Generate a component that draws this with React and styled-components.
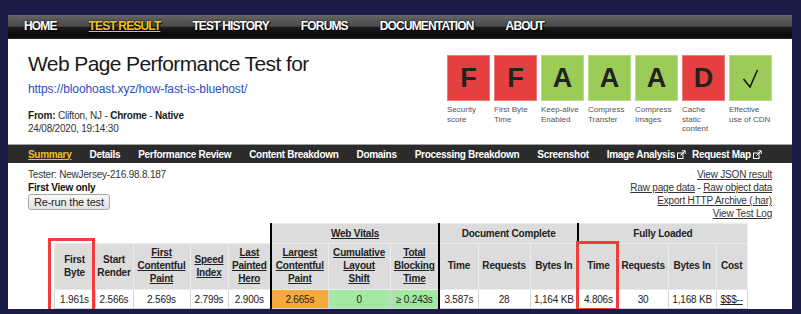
import React from 'react';
import styled, { createGlobalStyle } from 'styled-components';

const GlobalStyle = createGlobalStyle`
  html, body { margin: 0; padding: 0; background: #1b1c47; }
  body { font-family: "Liberation Sans", Arial, sans-serif; color: #222; }
`;

const Page = styled.div`
  padding: 15px 9px 0 8px;
`;

const TopNav = styled.nav`
  height: 24px;
  box-sizing: border-box;
  display: flex;
  align-items: center;
  gap: 32px;
  padding: 0 0 2px 16px;
  background: linear-gradient(to bottom, #646464 0%, #4b4b4b 46%, #1c1c1c 52%, #070707 88%, #262626 100%);
`;

const NavLink = styled.a`
  font-family: "Liberation Sans", Arial, sans-serif;
  font-weight: bold;
  font-size: 12px;
  letter-spacing: -0.85px;
  line-height: 16px;
  color: ${p => (p.$active ? '#f2c12e' : '#fff')};
  text-decoration: ${p => (p.$active ? 'underline' : 'none')};
  text-shadow: 1px 1px 1px #000, 0 0 2px #000;
`;

const Panel = styled.div`
  background: #fff;
`;

const Header = styled.header`
  height: 105px;
  box-sizing: border-box;
  padding: 13px 20px 0;
  display: flex;
  justify-content: space-between;
  align-items: flex-start;
`;

const Title = styled.h1`
  margin: 0;
  font-size: 21px;
  font-weight: normal;
  line-height: 24px;
  letter-spacing: -0.6px;
  color: #1a1a1a;
`;

const UrlLink = styled.a`
  display: block;
  margin-top: 5px;
  font-size: 12px;
  line-height: 16px;
  letter-spacing: -0.1px;
  color: #2a4dc8;
  text-decoration: none;
`;

const Meta = styled.div`
  margin-top: 12px;
  font-size: 10px;
  line-height: 13px;
  letter-spacing: -0.2px;
  color: #333;
  b { color: #1a1a1a; }
`;

const Grades = styled.div`
  display: flex;
  gap: 4px;
  margin-top: 3px;
`;

const Grade = styled.div`
  width: 43px;
`;

const GradeBox = styled.div`
  height: 46px;
  background: ${p => p.$color};
  display: flex;
  align-items: center;
  justify-content: center;
  font-size: 27px;
  font-weight: bold;
  color: #222;
  box-shadow: inset 0 0 0 1px rgba(255, 255, 255, 0.3);
`;

const GradeLabel = styled.div`
  margin-top: 4px;
  font-size: 8px;
  line-height: 9.5px;
  color: #555;
  white-space: nowrap;
`;

const SubNav = styled.nav`
  height: 18px;
  border-top: 1px solid #a0a0a0;
  background: #2b2b2b;
  display: flex;
  align-items: center;
  padding-left: 20px;
  gap: 18px;
`;

const SubLink = styled.a`
  display: inline-flex;
  align-items: center;
  gap: 2px;
  font-size: 10px;
  font-weight: bold;
  letter-spacing: -0.3px;
  color: ${p => (p.$active ? '#f0be2c' : '#fff')};
  text-decoration: ${p => (p.$active ? 'underline' : 'none')};
  margin-right: ${p => (p.$tight ? '-12px' : '0')};
`;

const Body = styled.div`
  padding: 5px 20px 0;
`;

const InfoRow = styled.div`
  display: flex;
  justify-content: space-between;
  align-items: flex-start;
`;

const InfoText = styled.div`
  font-size: 10px;
  line-height: 13px;
  letter-spacing: -0.2px;
  color: #333;
`;

const Strong = styled.div`
  font-weight: bold;
  color: #111;
`;

const Button = styled.button`
  height: 16px;
  box-sizing: border-box;
  padding: 0 5px;
  font-family: inherit;
  font-size: 11px;
  letter-spacing: -0.2px;
  color: #222;
  border: 1px solid #a8a8a8;
  border-radius: 3px;
  background: linear-gradient(#fbfbfb, #e2e2e2);
  display: flex;
  align-items: center;
`;

const Links = styled.div`
  text-align: right;
  font-size: 10px;
  line-height: 13px;
  letter-spacing: -0.2px;
  color: #333;
`;

const TextLink = styled.a`
  color: #333;
  text-decoration: underline;
`;

const TableWrap = styled.div`
  position: relative;
  width: 693px;
  margin: 3px auto 0;
`;

const Results = styled.table`
  border-collapse: collapse;
  table-layout: fixed;
  width: 693px;
  font-size: 10px;
  letter-spacing: -0.2px;
  color: #222;
  text-align: center;
`;

const Blank = styled.th`
  border: none;
  padding: 0;
`;

const GroupHead = styled.th`
  height: 19px;
  padding: 0;
  background: #dcdcdc;
  border: 1px solid #ececec;
  border-left: 2px solid #000;
  font-weight: bold;
  color: #222;
`;

const ColHead = styled.th`
  height: 45px;
  padding: 0 1px;
  background: #dcdcdc;
  border: 1px solid #ececec;
  border-left: ${p => (p.$divider ? '2px solid #000' : '1px solid #ececec')};
  font-weight: bold;
  line-height: 12.7px;
  color: #222;
  vertical-align: middle;
`;

const HeadLink = styled.a`
  color: #222;
  text-decoration: underline;
`;

const Cell = styled.td`
  height: 18px;
  padding: 0;
  white-space: nowrap;
  background: ${p => p.$bg || '#fff'};
  border: 1px solid #d4d4d4;
  border-left: ${p => (p.$divider ? '2px solid #000' : '1px solid #d4d4d4')};
`;

const CostLink = styled.a`
  color: #222;
  text-decoration: underline;
`;

const Highlight = styled.div`
  position: absolute;
  left: ${p => p.$left}px;
  top: ${p => p.$top}px;
  width: ${p => p.$width}px;
  height: ${p => p.$height}px;
  box-sizing: border-box;
  border: 3px solid #f03c3c;
  pointer-events: none;
`;

const RED = '#e5403f';
const GREEN = '#9dcb57';

const grades = [
  { v: 'F', c: RED, l: ['Security', 'score'] },
  { v: 'F', c: RED, l: ['First Byte', 'Time'] },
  { v: 'A', c: GREEN, l: ['Keep-alive', 'Enabled'] },
  { v: 'A', c: GREEN, l: ['Compress', 'Transfer'] },
  { v: 'A', c: GREEN, l: ['Compress', 'Images'] },
  { v: 'D', c: RED, l: ['Cache', 'static', 'content'] },
  { v: 'check', c: GREEN, l: ['Effective', 'use of CDN'] },
];

const Check = () => (
  <svg width="17" height="19" viewBox="0 0 17 19">
    <polyline points="1.5,10 8,18 15.5,1" fill="none" stroke="#111" strokeWidth="1.5" strokeLinejoin="miter" />
  </svg>
);

const ExtIcon = () => (
  <svg width="9" height="9" viewBox="0 0 9 9">
    <rect x="0.5" y="3" width="5.5" height="5.5" fill="none" stroke="#fff" strokeWidth="1" />
    <path d="M3.5 5.5 L8 1 M5 0.8 H8.2 V4" fill="none" stroke="#fff" strokeWidth="1" />
  </svg>
);

const cols = [41, 38, 57, 38, 43, 57, 62, 49, 39, 52, 48, 40, 50, 48, 31];

const headers = [
  { t: ['First', 'Byte'] },
  { t: ['Start', 'Render'] },
  { t: ['First', 'Contentful', 'Paint'], link: true },
  { t: ['Speed', 'Index'], link: true },
  { t: ['Last', 'Painted', 'Hero'], link: true },
  { t: ['Largest', 'Contentful', 'Paint'], link: true, divider: true },
  { t: ['Cumulative', 'Layout', 'Shift'], link: true },
  { t: ['Total', 'Blocking', 'Time'], link: true },
  { t: ['Time'], divider: true },
  { t: ['Requests'] },
  { t: ['Bytes In'] },
  { t: ['Time'], divider: true },
  { t: ['Requests'] },
  { t: ['Bytes In'] },
  { t: ['Cost'] },
];

const values = [
  { v: '1.961s' },
  { v: '2.566s' },
  { v: '2.569s' },
  { v: '2.799s' },
  { v: '2.900s' },
  { v: '2.665s', bg: '#f7a93c', divider: true },
  { v: '0', bg: '#a2eaa2' },
  { v: '\u2265 0.243s', bg: '#a2eaa2' },
  { v: '3.587s', divider: true },
  { v: '28' },
  { v: '1,164 KB' },
  { v: '4.806s', divider: true },
  { v: '30' },
  { v: '1,168 KB' },
  { v: '$$$--', cost: true },
];

const lines = (arr, Wrap) =>
  arr.map((s, i) => (
    <React.Fragment key={i}>
      {i > 0 && <br />}
      {Wrap ? <Wrap href="#">{s}</Wrap> : s}
    </React.Fragment>
  ));

export default function App() {
  return (
    <>
      <GlobalStyle />
      <Page>
        <TopNav>
          <NavLink href="#">HOME</NavLink>
          <NavLink href="#" $active>TEST RESULT</NavLink>
          <NavLink href="#">TEST HISTORY</NavLink>
          <NavLink href="#">FORUMS</NavLink>
          <NavLink href="#">DOCUMENTATION</NavLink>
          <NavLink href="#">ABOUT</NavLink>
        </TopNav>
        <Panel>
          <Header>
            <div>
              <Title>Web Page Performance Test for</Title>
              <UrlLink href="#">https://bloohoast.xyz/how-fast-is-bluehost/</UrlLink>
              <Meta>
                <b>From:</b> Clifton, NJ - <b>Chrome</b> - <b>Native</b>
                <br />
                24/08/2020, 19:14:30
              </Meta>
            </div>
            <Grades>
              {grades.map((g, i) => (
                <Grade key={i}>
                  <GradeBox $color={g.c}>{g.v === 'check' ? <Check /> : g.v}</GradeBox>
                  <GradeLabel>{lines(g.l)}</GradeLabel>
                </Grade>
              ))}
            </Grades>
          </Header>
          <SubNav>
            <SubLink href="#" $active>Summary</SubLink>
            <SubLink href="#">Details</SubLink>
            <SubLink href="#">Performance Review</SubLink>
            <SubLink href="#">Content Breakdown</SubLink>
            <SubLink href="#">Domains</SubLink>
            <SubLink href="#">Processing Breakdown</SubLink>
            <SubLink href="#">Screenshot</SubLink>
            <SubLink href="#" $tight>Image Analysis <ExtIcon /></SubLink>
            <SubLink href="#">Request Map <ExtIcon /></SubLink>
          </SubNav>
          <Body>
            <InfoRow>
              <InfoText>
                Tester: NewJersey-216.98.8.187
                <Strong>First View only</Strong>
                <Button type="button">Re-run the test</Button>
              </InfoText>
              <Links>
                <TextLink href="#">View JSON result</TextLink>
                <br />
                <TextLink href="#">Raw page data</TextLink> - <TextLink href="#">Raw object data</TextLink>
                <br />
                <TextLink href="#">Export HTTP Archive (.har)</TextLink>
                <br />
                <TextLink href="#">View Test Log</TextLink>
              </Links>
            </InfoRow>
            <TableWrap>
              <Results>
                <colgroup>
                  {cols.map((w, i) => (
                    <col key={i} style={{ width: w }} />
                  ))}
                </colgroup>
                <thead>
                  <tr>
                    <Blank colSpan={5} />
                    <GroupHead colSpan={3}>
                      <HeadLink href="#">Web Vitals</HeadLink>
                    </GroupHead>
                    <GroupHead colSpan={3}>Document Complete</GroupHead>
                    <GroupHead colSpan={4}>Fully Loaded</GroupHead>
                  </tr>
                  <tr>
                    {headers.map((h, i) => (
                      <ColHead key={i} $divider={h.divider}>
                        {lines(h.t, h.link ? HeadLink : null)}
                      </ColHead>
                    ))}
                  </tr>
                </thead>
                <tbody>
                  <tr>
                    {values.map((c, i) => (
                      <Cell key={i} $bg={c.bg} $divider={c.divider}>
                        {c.cost ? <CostLink href="#">{c.v}</CostLink> : c.v}
                      </Cell>
                    ))}
                  </tr>
                </tbody>
              </Results>
              <Highlight $left={-6} $top={15} $width={47} $height={75} />
              <Highlight $left={522} $top={18} $width={43} $height={70} />
            </TableWrap>
          </Body>
        </Panel>
      </Page>
    </>
  );
}
